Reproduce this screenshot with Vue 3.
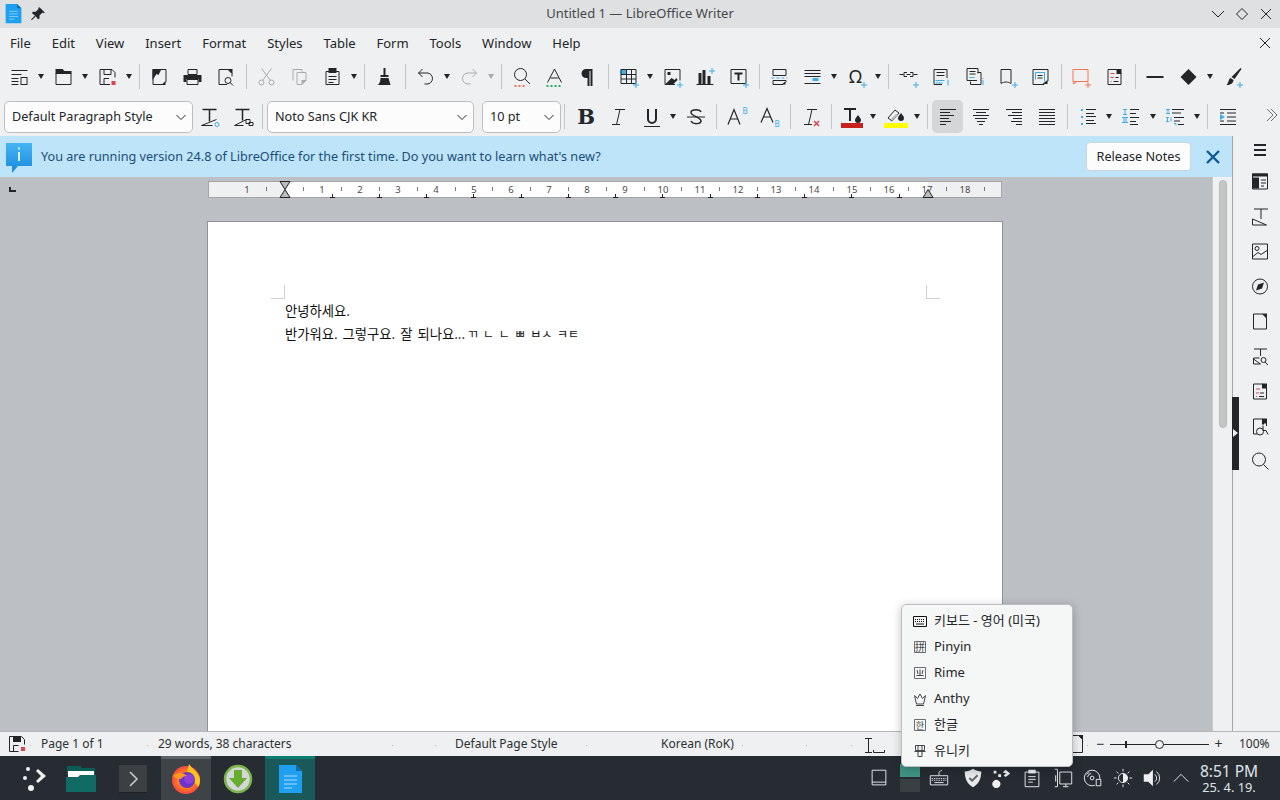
<template>
  <div class="screen">
    <!-- title bar -->
    <header class="titlebar">
      <svg class="tb-logo" viewBox="0 0 24 24" v-html="icons.writer"></svg>
      <svg class="tb-pin" viewBox="0 0 24 24" v-html="icons.pin"></svg>
      <span class="title">Untitled 1 — LibreOffice Writer</span>
      <div class="winctl">
        <svg viewBox="0 0 24 24" v-html="icons.winmin"></svg>
        <svg viewBox="0 0 24 24" v-html="icons.winmax"></svg>
        <svg viewBox="0 0 24 24" v-html="icons.winclose"></svg>
      </div>
    </header>

    <!-- menu -->
    <nav class="menubar">
      <span v-for="m in menus" :key="m">{{ m }}</span>
      <svg class="menu-close" viewBox="0 0 24 24" v-html="icons.winclose"></svg>
    </nav>

    <!-- toolbars -->
    <div class="toolbar tb1">
      <template v-for="(it, idx) in row1" :key="idx">
        <i v-if="it === '|'" class="sep"></i>
        <i v-else-if="it === '>'" class="arrow"></i>
        <i v-else-if="it === '>g'" class="arrow off"></i>
        <svg v-else class="cell" viewBox="0 0 24 24" v-html="icons[it]"></svg>
      </template>
    </div>
    <div class="toolbar tb2">
      <div class="combo c-style">Default Paragraph Style<svg viewBox="0 0 12 12"><path d="M1.5 4l4.5 4.5L10.500 4" /></svg></div>
      <svg class="cell" viewBox="0 0 24 24" v-html="icons.tupdate"></svg>
      <svg class="cell" viewBox="0 0 24 24" v-html="icons.tnew"></svg>
      <i class="sep tight"></i>
      <div class="combo c-font">Noto Sans CJK KR<svg viewBox="0 0 12 12"><path d="M1.5 4l4.5 4.5L10.500 4" /></svg></div>
      <div class="combo c-size">10 pt<svg viewBox="0 0 12 12"><path d="M1.5 4l4.5 4.5L10.500 4" /></svg></div>
      <i class="sep tight"></i>
      <template v-for="(it, idx) in row2" :key="idx">
        <i v-if="it === '|'" class="sep"></i>
        <i v-else-if="it === '>'" class="arrow"></i>
        <span v-else class="cellwrap" :class="{ active: it === 'alignl' }">
          <svg viewBox="0 0 24 24" v-html="icons[it]"></svg>
        </span>
      </template>
      <svg class="more" viewBox="0 0 24 24" v-html="icons.more"></svg>
    </div>

    <!-- body -->
    <div class="body">
      <div class="docarea">
        <div class="infobar">
          <svg class="info-ic" viewBox="0 0 26 30" v-html="icons.info"></svg>
          <span class="info-text">You are running version 24.8 of LibreOffice for the first time. Do you want to learn what's new?</span>
          <button class="relnotes">Release Notes</button>
          <svg class="info-x" viewBox="0 0 24 24" v-html="icons.infox"></svg>
        </div>
        <div class="docrow">
          <div class="workspace">
            <i class="tabmark"></i>
            <svg class="ruler" width="794" height="17" viewBox="0 0 794 17">
              <rect x="0.500" y="0.500" width="793" height="16" fill="#eff0f1" stroke="#a3a5a8" />
              <rect x="76" y="1" width="644" height="15" fill="#fff" />
              <template v-for="t in rulerTicks" :key="t">
                <path :d="`M${t + 0.5} 6v4`" stroke="#77797c" />
              </template>
              <text v-for="n in rulerNums" :key="n.x" :x="n.x" y="12" class="rnum">{{ n.t }}</text>
              <path v-for="x in rulerTabs" :key="x" :d="`M${x + 0.5} 13v3M${x - 2} 16.500h5`" stroke="#232629" />
              <path d="M72 0.500h10l-5 8zM72 16.500h10l-5-8z" fill="#b9bbbd" stroke="#232629" />
              <path d="M715 16.500h10l-5-8z" fill="#b9bbbd" stroke="#232629" />
            </svg>
            <div class="page">
              <i class="crop tl"></i>
              <i class="crop tr"></i>
              <p>안녕하세요.</p>
              <p class="line2">반가워요. 그렇구요. 잘 되나요...<span class="jamo">ㄲ ㄴ ㄴ ㅃ ㅂㅅ ㅋㅌ</span></p>
            </div>
          </div>
          <div class="vscroll"><div class="thumb"></div></div>
        </div>
      </div>
      <aside class="sidebar">
        <svg v-for="s in sideIcons" :key="s" viewBox="0 0 24 24" v-html="icons[s]"></svg>
        <div class="sidegrip"><i></i></div>
      </aside>
    </div>

    <!-- status bar -->
    <footer class="statusbar">
      <div v-for="c in statusCells" :key="c.k" class="st" :style="{ width: c.w + 'px', paddingLeft: c.p + 'px' }">
        <svg v-if="c.ic" viewBox="0 0 24 24" v-html="icons[c.ic]"></svg>
        <template v-else>{{ c.t }}</template>
      </div>
      <div class="zoomctl">
        <span class="zm">−</span>
        <div class="slider"><i class="tick"></i><i class="knob"></i></div>
        <span class="zm">+</span>
        <span class="pct">100%</span>
      </div>
    </footer>

    <!-- panel -->
    <div class="taskbar">
      <div class="task" style="width: 50px"><svg viewBox="0 0 30 30" v-html="icons.launcher"></svg></div>
      <div class="task" style="width: 46px"><svg viewBox="0 0 30 30" v-html="icons.files"></svg></div>
      <div class="task" style="width: 57px"><svg viewBox="0 0 30 30" v-html="icons.terminal"></svg></div>
      <div class="task open"><svg viewBox="0 0 30 30" v-html="icons.firefox"></svg></div>
      <div class="task" style="width: 54px"><svg viewBox="0 0 30 30" v-html="icons.download"></svg></div>
      <div class="task current"><svg viewBox="0 0 30 30" v-html="icons.writerTask"></svg></div>
      <div class="tray">
        <template v-for="t in trayIcons" :key="t.i">
          <div v-if="t.i === 'pager'" class="pager" :style="{ marginLeft: t.m + 'px' }"><i></i><i></i></div>
          <svg v-else viewBox="0 0 24 24" :style="{ marginLeft: t.m + 'px' }" v-html="icons[t.i]"></svg>
        </template>
        <div class="clock"><b>8:51 PM</b><span>25. 4. 19.</span></div>
      </div>
    </div>

    <!-- input method popup -->
    <div class="immenu">
      <div v-for="m in imeItems" :key="m.t" class="imrow">
        <svg viewBox="0 0 16 16" v-html="icons[m.i]"></svg>
        <span>{{ m.t }}</span>
      </div>
    </div>
  </div>
</template>

<script setup>
const D = '#232629'
const B = '#3daee9'
const R = '#da4453'
const O = '#f47750'
const G = '#a9abad'
const W = '#eff0f1'

// svg wrapper attributes live in css (stroke, fill), these are only the shapes
const plus = `<path stroke="${B}" d="M19.500 17v6M16.500 20h6"/>`
const solid = (d, c = D) => `<path fill="${c}" stroke="none" d="${d}"/>`

const icons = {
  writer: `<path fill="#1e9ff0" stroke="none" d="M3 1h13l5 5v17H3z"/><path fill="#0e6fae" stroke="none" d="M16 1l5 5h-5z"/><path stroke="#8fd0f7" d="M7 9.500h10M7 12.500h10M7 15.500h10M7 18.500h6"/>`,
  pin: solid('M14 3l7 7-2 1-1-1-4 4 0 4-2 1-3-4-5 5-1 0 0-1 5-5-4-3 1-2 4 0 4-4-1-1z'),
  winmin: `<path d="M6 9l6 6 6-6"/>`,
  winmax: `<path d="M12 6.500L17.500 12 12 17.500 6.500 12z"/>`,
  winclose: `<path d="M7 7l10 10M17 7L7 17"/>`,

  styles: `<path d="M4 5.500h16M4 9.500h10M4 13.500h7M4 16.500h7M4 19.500h7"/><rect x="13.500" y="12.500" width="6" height="7"/>`,
  open: `<path d="M4.500 8.500h15v11h-15z"/>` + solid('M4 4h7l2 2h7v3H4z'),
  save: `<path d="M4.500 4.500h12l3 3v5M4.500 4.500v15h10"/><path d="M8.500 4.500v5h7v-5M8.500 19.500v-6h5"/>` + solid('M16 16h4v4h-4z', R),
  pdf: `<path d="M5.500 4.500h13v12l-3 3h-10z"/>` + solid('M5 4h9l-3 6-2-1-4 6zM18 16v4h-4z'),
  print: solid('M3 10h18v7h-3v-3H6v3H3z') + `<path d="M7.500 4.500h9v5h-9zM6.500 14.500h11v5h-11z"/>`,
  preview: `<path d="M13.500 19.500h-8v-15h9l4 4v3"/>` + solid('M14 4h5v5z') + `<circle cx="14.500" cy="15.500" r="3"/><path d="M16.500 17.500l3 3"/>`,
  cut: `<g stroke="${G}"><circle cx="7" cy="17.500" r="2.500"/><circle cx="17" cy="17.500" r="2.500"/><path d="M7 3.500l9 12M17 3.500l-9 12"/></g>`,
  copy: `<g stroke="${G}"><path d="M5.500 15.500v-11h9v3"/><path d="M9.500 7.500h9v8l-4 4h-5z"/></g>` + solid('M14 15h5l-5 5z', G),
  paste: `<path d="M5.500 6.500h13v13h-13z"/>` + solid('M8 3h8v5H8z') + `<path d="M8 11.500h8M8 14.500h8M8 17.500h5"/>`,
  brush: solid('M11 3h2v7h3v2H8v-2h3zM8 13h8l2 7H5c2-1 3-4 3-7z'),
  undo: `<path d="M9 4L5 8l4 4M5 8h8.500a5.500 5.500 0 0 1 0 11H11"/>`,
  redo: `<path stroke="${G}" d="M15 4l4 4-4 4M19 8h-8.500a5.500 5.500 0 0 0 0 11H13"/>`,
  find: `<circle cx="11" cy="9.500" r="6"/><path d="M15.500 14l5 5"/><path stroke="${O}" stroke-width="2" stroke-dasharray="2 2" d="M5 21h12"/>`,
  spell: `<path d="M5 17.500L12 4l7 13.500M8 13h8"/><path stroke="#27ae60" stroke-width="2" stroke-dasharray="2 2" d="M4 21h16"/>`,
  para: solid('M17 4h-6.500a4.500 4.500 0 0 0 0 9H12v8h2V6h1v15h2z'),
  table: solid('M4 4h6v5H4z', B) + `<path d="M4.500 4.500h15v14h-15zM4.500 9.500h15M4.500 14h15M10 4.500v14M15 4.500v14"/>` + plus,
  image: `<path d="M4.500 4.500h15v11M4.500 4.500v15h10"/>` + solid('M5 19l6-6 3 2 2-2 1 2-4 4z') + solid('M7 7h3v3H7z') + plus,
  chart: solid('M5 8h3v11H5zM9 5h3v14H9zM14 11h3v8h-3z') + `<path d="M3 19.500h17"/>` + `<path stroke="${B}" d="M18.500 3v6M15.500 6h6"/>`,
  textbox: `<path d="M4.500 4.500h15v14h-15z"/><path stroke-width="2" d="M8 8.500h8M12 8.500v7"/>` + plus,
  pgbreak: `<path d="M5.500 4.500h13v6h-13z"/><path stroke="${B}" stroke-dasharray="3 2" d="M4 13h16"/><path d="M5.500 15.500h13v1l-3 3h-10z"/>` + solid('M14 19.500l4-3v3z'),
  field: `<path d="M4 5.500h16M4 8.500h16M4 11.500h16M4 18.500h16"/>` + solid('M12 13h6v3h-6z', B),
  omega: `<text x="11" y="18" text-anchor="middle" font-size="18" fill="${D}" stroke="none" font-family="Noto Sans">Ω</text>` + plus,
  link: `<path d="M3 9.500h4M17 9.500h4M7.500 7.500h3M13.500 7.500h3v4h-3M10.500 11.500h-3v-4M10 9.500h4"/>` + plus,
  footnote: `<path d="M17.500 13V4.500h-13v15h8"/><path d="M7 7.500h8M7 10.500h8"/><path stroke="${B}" d="M6 15.500h9M6 18h7M18.500 14.500v6"/>`,
  endnote: `<path d="M14.500 15.500h-10v-12h11v5"/><path d="M15 7.500h3.500v12H8v-3"/><path d="M7 6.500h6M7 9h6"/><path stroke="${B}" d="M7 12.500h5M20.500 13v1M20.500 15v5"/>`,
  bookmark: `<path d="M5.500 18.500V4.500h10v14"/><path d="M5.500 18.500c3-2 7-2 10 0"/>` + plus,
  crossref: `<path d="M4.500 4.500h15v11l-4 4h-11z"/><path stroke="${B}" d="M7 7.500h9v9M7 7.500v7"/><path d="M9 10.500h5M9 13h5"/>` + solid('M14 19l5-4v4z'),
  comment: `<g stroke="${O}"><path d="M3.500 4.500h15v12h-15zM4 17v2l3-2"/></g>` + `<path stroke="${O}" d="M18.500 17v6M15.500 20h6"/>`,
  tracked: `<path d="M5.500 4.500h9l4 4v11h-13z"/>` + solid('M14 4h5v5h-5z') + `<path stroke="${R}" d="M8 8.500h4"/><path d="M13 12.500h3"/><path stroke="${R}" d="M8 12.500h3M8 16.500h1"/><path d="M11 16.500h5"/>`,
  line: `<path stroke-width="2" d="M3 12h17"/>`,
  diamond: solid('M12 4l8 8-8 8-8-8z'),
  draw: solid('M20 3l1 1-7 10-3-2zM10 13l3 2c0 3-3 5-7 5 2-2 2-6 4-7z') + plus,

  tupdate: `<path stroke-width="1.500" d="M4 4.500h14M11 4.500v12"/><path d="M3 20.500l15-6M3 20.500h11"/><circle cx="18.500" cy="19.500" r="2" stroke="${B}"/>`,
  tnew: `<path stroke-width="1.500" d="M4 4.500h14M11 4.500v11"/><path d="M3 20.500l12-6M3 20.500h9"/><path d="M14.500 14.500h4v4h-4z"/><path d="M17.500 17.500h4v3h-4z"/>`,
  bold: `<text x="12" y="18.500" text-anchor="middle" font-size="21" font-weight="700" fill="${D}" stroke="none" font-family="DejaVu Serif">B</text>`,
  italic: `<path d="M8 4.500h10M13 4.500L9.500 19.500M5 19.500h8"/>`,
  under: `<path stroke-width="2" d="M8 4v10a4 4 0 0 0 8 0V4"/><path d="M4 21.500h16"/>`,
  strike: `<path stroke-width="1.500" d="M17 7c-1-3-9-3-10 0-1 4 10 5 10 9 0 3-8 4-10 0"/><path d="M3 12h18"/>`,
  sup: `<path stroke-width="1.200" d="M3 19.500L9 4.500l6 15M5.500 14h7"/><text x="20" y="9" text-anchor="middle" font-size="8" fill="${B}" stroke="none" font-family="Noto Sans">B</text>`,
  sub: `<path stroke-width="1.200" d="M3 17.500L9 3.500l6 14M5.500 12h7"/><text x="19" y="22" text-anchor="middle" font-size="8" fill="${B}" stroke="none" font-family="Noto Sans">B</text>`,
  clear: `<path d="M8 4.500h10M13 4.500L9.500 19.500M5 19.500h8"/><path stroke="${R}" stroke-width="1.500" d="M15 16l5 5M20 16l-5 5"/>`,
  color: `<path stroke-width="2" d="M4 4h12M10 4v12"/>` + solid('M18 10c-1 2-3 3-3 5a3 3 0 0 0 6 0c0-2-2-3-3-5z') + solid('M1 18h22v5H1z', '#c9211e'),
  hilite: `<path d="M4 13l7-8 4 3-7 8z"/>` + solid('M7 14l5-5 2 1-6 6z', '#bbb') + solid('M17 8c-1 2-3 3-3 5a3 3 0 0 0 6 0c0-2-2-3-3-5z') + solid('M-0 18h24v5H0z', '#ffff00'),
  alignl: `<path d="M4 4.500h16M4 7.500h10M4 10.500h14M4 13.500h9M4 16.500h11M4 19.500h6"/>`,
  alignc: `<path d="M4 4.500h16M7 7.500h10M4 10.500h16M6 13.500h12M8 16.500h8M10 19.500h4"/>`,
  alignr: `<path d="M4 4.500h16M10 7.500h10M6 10.500h14M11 13.500h9M9 16.500h11M14 19.500h6"/>`,
  alignj: `<path d="M4 4.500h16M4 7.500h16M4 10.500h16M4 13.500h16M4 16.500h16M4 19.500h16"/>`,
  bullets: solid('M5 4h2v2H5zM5 11h2v2H5zM5 18h2v2H5z', B) + `<path d="M10 4.500h10M10 8.500h8M10 11.500h10M10 15.500h8M10 18.500h10"/>`,
  numbers: `<path stroke="${B}" d="M3 4.500h4M5 4.500v5M3 9.500h4M2 12.500h6M4 12.500v5M6 12.500v5M2 17.500h6"/><path d="M10 4.500h9M10 8.500h6M10 12.500h9M10 16.500h6M10 19.500h8"/>`,
  outline: `<path stroke="${B}" d="M2 4.500h4M4 4.500v4M2 8.500h4M2 12.500h3M3.500 12.500v4M2 16.500h3M7 12.500v4M10 18.500h2v2"/><path d="M8 4.500h12M8 8h9M10 12.500h10M10 16h6M14 19.500h6"/>`,
  indent: `<path d="M4 4.500h16M4 19.500h16M11 8h9M11 12h9M11 16h9M4 8h4M4 16h4"/>` + solid('M4 9l5 3-5 3z', B),
  more: `<path d="M7 6l6 6-6 6M11 6l6 6-6 6"/>`,

  info: `<defs><linearGradient id="ig" x1="0" y1="0" x2="0" y2="1"><stop offset="0" stop-color="#45b6f3"/><stop offset="1" stop-color="#1789dc"/></linearGradient></defs>` + `<path fill="url(#ig)" stroke="none" d="M0 0h26v23H12l-6 7v-7H0z"/><path stroke="#d8effc" stroke-width="2" fill="none" d="M13 9v9"/><path stroke="#d8effc" stroke-width="2" d="M13 4.500v2"/>`,
  infox: `<path stroke="#0f5a94" stroke-width="2.400" d="M6 6l12 12M18 6L6 18"/>`,

  menu: `<path stroke-width="2" d="M6 7h12M6 12h12M6 17h12"/>`,
  props: solid('M4 4h16v3H4z') + `<path d="M4.500 4.500h15v15h-15z"/>` + solid('M5 8h6v11H5z') + `<path d="M13 10.500h5M13 13.500h5M13 16.500h3"/>`,
  tstyle: `<path d="M6 4.500h14M13 4.500v10"/><path d="M4.500 20.500v-6l14 6z"/>`,
  gallery: `<path d="M4.500 4.500h15v15h-15z"/><circle cx="9" cy="9" r="2"/><path d="M5 17l5-4 3 2 6-4"/>`,
  compass: `<circle cx="12" cy="12" r="7.500"/>` + solid('M16 8l-2 6-6 2 2-6z'),
  pagei: `<path d="M5.500 4.500h9l4 4v11h-13z"/>` + solid('M14 4h5v5z'),
  tfind: `<path d="M6 4.500h13M12.500 4.500v7"/><path d="M5.500 19.500v-6h6M5.500 19.500h7l-7-5"/><circle cx="15.500" cy="15.500" r="2.500"/><path d="M17 17.500l3 3"/>`,
  change: `<path d="M5.500 4.500h9l4 4v11h-13z"/>` + solid('M14 4h5v5h-5z') + `<path stroke="${R}" d="M8 9.500h4M8 13.500h3M8 17h1"/><path d="M12 13.500h4M11 17h5"/>`,
  access: `<path d="M9 19.500H5.500v-15h9l4 4v3"/>` + solid('M14 4h5v5h-5z') + `<circle cx="12" cy="17" r="3.500"/><path d="M15 11v5h3l2 4"/>` + solid('M14 8h2v2h-2z'),
  search: `<circle cx="11" cy="10" r="6.500"/><path d="M15.500 15l5 5"/>`,

  floppy: `<path d="M4.500 4.500h12l3 3v5M4.500 4.500v15h9"/>` + solid('M8 4h8v6H8z') + `<path d="M8.500 19.500v-6h5"/>` + solid('M16 15h4v4h-4z', R),
  cursor: `<path d="M3 6.500h7M3 20.500h7M6.500 6.500v14"/><path d="M11.500 18v2.500h11V18"/>`,
  docs: `<path d="M4.500 3.500h11l4 4v13h-15z"/>` + solid('M15 3h5v5z'),

  launcher: `<circle cx="7" cy="14" r="2" fill="${W}" stroke="none"/><circle cx="10" cy="5" r="2" fill="${W}" stroke="none"/><circle cx="13" cy="24" r="3" fill="${W}" stroke="none"/>` + solid('M18 7l2-2 8 7-8 7-2-2 5-5z', W),
  files: solid('M1 2h14v2h14v7H1z', '#0a5c56') + solid('M2 7h26v6H2z', '#fcfcfc') + `<path fill="#0f6b64" stroke="none" d="M0 13h12l2-2h16v17H0z"/>`,
  terminal: solid('M1 1h28v27H1z', '#3c4043') + solid('M1 28h28v1H1z', '#1e2023') + `<path stroke="#c8cacb" stroke-width="1.600" d="M12 8l7 7-7 7"/>`,
  firefox: `<defs><radialGradient id="ff1" cx="0.500" cy="0.500" r="0.600"><stop offset="0" stop-color="#ffd23a"/><stop offset="0.500" stop-color="#ff7a1c"/><stop offset="1" stop-color="#f0315a"/></radialGradient></defs>` +
    `<circle cx="15" cy="16" r="14" fill="url(#ff1)" stroke="none"/>` + solid('M18 0c3 5 10 8 11 15 0 3 0 6-2 8L16 8z', '#ffc21e') +
    `<circle cx="16" cy="16" r="8" fill="#6a34c8" stroke="none"/><circle cx="18" cy="15" r="5" fill="#8d3fd8" stroke="none"/>` + solid('M2 12c4-4 10-4 14 0-3 0-5 1-6 3-3 0-6-1-8-3z', '#ff9a1f'),
  download: `<circle cx="15" cy="15" r="13" fill="#d4d6d8" stroke="#7ab648" stroke-width="2.500"/>` + solid('M11 6h8v8h5l-9 10-9-10h5z', '#67ad2e'),
  writerTask: solid('M4 1h17l6 6v22H4z', '#1f9ff0') + solid('M21 1l6 6h-6z', '#0f6ba8') + `<path stroke="#7fc7f5" stroke-width="1.500" d="M9 12h13M9 16h13M9 20h13M9 24h8"/>`,

  showdesk: `<path stroke="${W}" d="M4.500 3.500h15v16h-15zM4.500 16.500h15"/>`,
  trayKbd: `<g stroke="${W}"><path d="M2.500 9.500h19v10h-19z"/><path stroke-dasharray="1.500 1" d="M4 12.500h16M4 14.500h16"/><path d="M7 17h10"/><path d="M12 9V6c0-2 3-1 3-3"/></g>`,
  shield: solid('M12 2c3 2 6 3 9 3 0 8-3 14-9 17C6 19 3 13 3 5c3 0 6-1 9-3z', '#e8e9ea') + `<path stroke="#5f6367" stroke-width="2" d="M8 12l3 3 6-6"/>`,
  trayNet: solid('M7 14a4.500 4.500 0 1 1-.1 0zM4 4h3v3H4zM9 8h3v3H9z', W) + solid('M14 6l3-3 5 4-5 4-2-2 3-2z', W),
  clip: `<g stroke="${W}"><path d="M4.500 5.500h15v16h-15z"/><path d="M8 10.500h8M8 13.500h8M8 16.500h5"/></g>` + solid('M8 3h8v4H8z', W),
  trayLan: `<g stroke="${W}"><path d="M8.500 5.500h13v13h-13zM3 2.500h3v19H3"/><path d="M4 9v7"/><path d="M12 21.500h6M15 18.500v3"/></g>`,
  disc: `<g stroke="${W}"><circle cx="11" cy="12" r="8.500"/><circle cx="11" cy="12" r="2"/><path d="M6 11a5 5 0 0 1 4-4M5 8a7 7 0 0 1 3-2"/></g>` + solid('M14 13h7v8h-7z', '#272c33') + `<path stroke="${W}" d="M15.500 13.500h5v7h-5z"/>`,
  sun: `<g stroke="${W}"><circle cx="12" cy="12" r="5"/><path d="M12 2v3M12 19v3M2 12h3M19 12h3M5 5l2 2M17 17l2 2M5 19l2-2M17 7l2-2"/></g>` + solid('M12 7a5 5 0 0 1 0 10z', W),
  volume: solid('M3 8h5l5-5v18l-5-5H3z', W) + `<path stroke="${W}" d="M15 8a5 5 0 0 1 0 8M17 5a9 9 0 0 1 0 14"/>`,
  chev: `<path stroke="${W}" d="M4 16l8-8 8 8"/>`,

  kbd: `<path stroke="#111" d="M1.500 3.500h13v10h-13z"/><path stroke="#111" stroke-dasharray="1 1" d="M3 6.500h10M3 8.500h10"/><path stroke="#111" d="M4 11h8"/>`,
  pinyin: `<path stroke="#6b6e71" d="M2.500 2.500h11v11h-11z"/><text x="8" y="12" text-anchor="middle" font-size="10" fill="#44474a" stroke="none" font-family="Noto Sans CJK SC">拼</text>`,
  rime: `<path stroke="#6b6e71" d="M2.500 2.500h11v11h-11z"/><path stroke="#44474a" d="M5 5l1 4M11 5l-1 4M8 4.500v6M4.500 10.500h7"/>`,
  crown: `<path stroke="#44474a" d="M2.500 4.500l2 8.500h7l2-8.500-3 3L8 3 5.500 7.500z"/><path stroke="#44474a" d="M4 14.500h8"/>`,
  hangul: `<path stroke="#6b6e71" d="M2.500 2.500h11v11h-11z"/><text x="8" y="11.500" text-anchor="middle" font-size="9" fill="#44474a" stroke="none" font-family="Noto Sans CJK KR">한</text>`,
  unikey: `<path stroke="#44474a" d="M3.500 2.500h9v5h-9zM6 2.500v5M10 2.500v5M2.500 8.500h11M6 8.500v5h4v-5"/>`,
}

const menus = ['File', 'Edit', 'View', 'Insert', 'Format', 'Styles', 'Table', 'Form', 'Tools', 'Window', 'Help']

const row1 = [
  'styles', '>', 'open', '>', 'save', '>', '|', 'pdf', 'print', 'preview', '|', 'cut', 'copy', 'paste', '>', '|', 'brush', '|',
  'undo', '>', 'redo', '>g', '|', 'find', 'spell', 'para', '|', 'table', '>', 'image', 'chart', 'textbox', '|',
  'pgbreak', 'field', '>', 'omega', '>', '|', 'link', 'footnote', 'endnote', 'bookmark', 'crossref', '|', 'comment', 'tracked', '|',
  'line', 'diamond', '>', 'draw',
]

const row2 = [
  'bold', 'italic', 'under', '>', 'strike', '|', 'sup', 'sub', '|', 'clear', '|', 'color', '>', 'hilite', '>', '|',
  'alignl', 'alignc', 'alignr', 'alignj', '|', 'bullets', '>', 'numbers', '>', 'outline', '>', '|', 'indent',
]

const sideIcons = ['menu', 'props', 'tstyle', 'gallery', 'compass', 'pagei', 'tfind', 'change', 'access', 'search']

// ruler marks, 1cm = 37.8px, origin at the left margin
const rulerOrigin = 76.5
const rulerNums = []
const rulerTicks = []
for (let i = -2; i <= 37; i++) {
  const x = Math.round(rulerOrigin + i * 18.9)
  if (x < 4 || x > 790) continue
  if (i % 2 === 0 && i !== 0) {
    rulerNums.push({ x, t: String(Math.abs(i / 2)) })
  } else if (i !== 0) {
    rulerTicks.push(x)
  }
}
const rulerTabs = []
for (let i = 0; i < 13; i++) rulerTabs.push(Math.round(123.5 + i * 47.25))

const statusCells = [
  { k: 'save', w: 31, p: 5, ic: 'floppy' },
  { k: 'page', w: 117, p: 10, t: 'Page 1 of 1' },
  { k: 'words', w: 245, p: 10, t: '29 words, 38 characters' },
  { k: 'e1', w: 43, p: 0 },
  { k: 'style', w: 151, p: 19, t: 'Default Page Style' },
  { k: 'lang', w: 156, p: 74, t: 'Korean (RoK)' },
  { k: 'e2', w: 64, p: 0 },
  { k: 'e3', w: 45, p: 0 },
  { k: 'cur', w: 210, p: 10, ic: 'cursor' },
  { k: 'doc', w: 26, p: 1, ic: 'docs' },
]

const trayIcons = [
  { i: 'showdesk', m: 0 },
  { i: 'pager', m: 10 },
  { i: 'trayKbd', m: 8 },
  { i: 'shield', m: 12 },
  { i: 'trayNet', m: 6 },
  { i: 'clip', m: 9 },
  { i: 'trayLan', m: 9 },
  { i: 'disc', m: 8 },
  { i: 'sun', m: 8 },
  { i: 'volume', m: 7 },
  { i: 'chev', m: 7 },
]

const imeItems = [
  { i: 'kbd', t: '키보드 - 영어 (미국)' },
  { i: 'pinyin', t: 'Pinyin' },
  { i: 'rime', t: 'Rime' },
  { i: 'crown', t: 'Anthy' },
  { i: 'hangul', t: '한글' },
  { i: 'unikey', t: '유니키' },
]
</script>

<style>
html,
body {
  margin: 0;
  background: #272c33;
}
</style>

<style scoped>
.screen {
  position: relative;
  width: 1280px;
  height: 800px;
  overflow: hidden;
  display: flex;
  flex-direction: column;
  background: #eff0f1;
  color: #232629;
  font: 13px/1.2 "Noto Sans", "Noto Sans CJK KR", sans-serif;
}

svg {
  fill: none;
  stroke: #232629;
  stroke-width: 1;
  flex: none;
}

/* title bar */
.titlebar {
  position: relative;
  height: 28px;
  flex: none;
  display: flex;
  align-items: center;
  justify-content: center;
  background: #dee0e2;
}
.tb-logo,
.tb-pin {
  position: absolute;
  top: 3px;
  width: 21px;
  height: 21px;
}
.tb-logo {
  left: 3px;
}
.tb-pin {
  top: 5px;
  left: 29px;
  width: 18px;
  height: 18px;
}
.title {
  color: #45484b;
}
.winctl {
  position: absolute;
  right: 2px;
  top: 2px;
  display: flex;
}
.winctl svg {
  width: 24px;
  height: 24px;
}

/* menu */
.menubar {
  position: relative;
  height: 28px;
  flex: none;
  box-sizing: border-box;
  display: flex;
  align-items: center;
  gap: 20.900px;
  padding: 3px 0 0 10px;
}
.menu-close {
  position: absolute;
  right: 3px;
  top: 3px;
  width: 24px;
  height: 24px;
}

/* toolbars */
.toolbar {
  flex: none;
  display: flex;
  align-items: center;
}
.tb1 {
  height: 41px;
  padding-left: 2.500px;
}
.tb2 {
  position: relative;
  height: 39px;
  padding-left: 4px;
}
.cell {
  width: 24px;
  height: 24px;
  padding: 0 4.5px;
  box-sizing: content-box;
}
.cellwrap {
  width: 33px;
  height: 33px;
  flex: none;
  display: flex;
  align-items: center;
  justify-content: center;
  border-radius: 5px;
}
.cellwrap svg {
  width: 24px;
  height: 24px;
}
.cellwrap.active {
  background: #d5d6d8;
  width: 31px;
  margin: 0 1px;
}
.sep {
  width: 8px;
  height: 25px;
  flex: none;
  position: relative;
}
.sep::before {
  content: "";
  position: absolute;
  left: 4px;
  top: 0;
  bottom: 0;
  width: 1px;
  background: #c2c4c6;
}
.sep.tight {
  width: 7px;
}
.sep.tight::before {
  left: 2px;
}
.arrow {
  width: 11px;
  height: 5px;
  flex: none;
  position: relative;
}
.arrow::before {
  content: "";
  position: absolute;
  left: 2px;
  top: 0;
  border-style: solid;
  border-width: 5px 3.5px 0;
  border-color: #232629 transparent transparent;
}
.arrow.off::before {
  border-top-color: #a9abad;
}
.combo {
  position: relative;
  box-sizing: border-box;
  height: 32px;
  flex: none;
  display: flex;
  align-items: center;
  padding-left: 7px;
  background: #fcfcfc;
  border: 1px solid #bcbfc2;
  border-radius: 5px;
  font-size: 12.650px;
}
.combo svg {
  position: absolute;
  right: 5px;
  top: 9px;
  width: 12px;
  height: 12px;
}
.c-style {
  width: 189px;
  margin-right: 1px;
}
.c-font {
  width: 207px;
  margin-right: 8px;
}
.c-size {
  width: 79px;
  margin-right: 1px;
}
.more {
  position: absolute;
  right: -4px;
  top: 6px;
  width: 24px;
  height: 24px;
  stroke: #6b6e71;
}

/* body */
.body {
  flex: 1;
  min-height: 0;
  display: flex;
}
.docarea {
  width: 1232px;
  flex: none;
  display: flex;
  flex-direction: column;
}
.infobar {
  height: 41px;
  flex: none;
  display: flex;
  align-items: center;
  background: #bde4f8;
  color: #1c4e78;
  padding-left: 6px;
  font-size: 12.650px;
}
.info-ic {
  width: 26px;
  height: 30px;
  margin-top: 2px;
  stroke: none;
}
.info-text {
  margin-left: 9px;
}
.relnotes {
  margin-left: auto;
  width: 105px;
  height: 29px;
  padding: 0;
  font: inherit;
  color: #232629;
  background: #fcfcfc;
  border: 1px solid #c9d8e0;
  border-radius: 4px;
}
.info-x {
  width: 24px;
  height: 24px;
  margin: 0 7px 0 10px;
}
.docrow {
  flex: 1;
  min-height: 0;
  display: flex;
}
.workspace {
  position: relative;
  flex: 1;
  min-width: 0;
  display: flex;
  flex-direction: column;
  align-items: flex-start;
  padding: 4px 0 0 208px;
  background: #bcbfc4;
}
.tabmark {
  position: absolute;
  left: 9px;
  top: 10px;
  width: 5px;
  height: 3px;
  border-left: 2px solid #232629;
  border-bottom: 2px solid #232629;
}
.ruler {
  stroke: none;
}
.rnum {
  font-size: 9.500px;
  fill: #4a4a48;
  stroke: none;
  text-anchor: middle;
}
.page {
  position: relative;
  box-sizing: border-box;
  width: 796px;
  flex: 1;
  margin: 23px 0 0 -1px;
  padding: 77px 0 0 77px;
  background: #fff;
  border: 1px solid #8f9296;
  border-bottom: 0;
  color: #111;
  font: 13.300px/23px "Noto Sans CJK KR", sans-serif;
}
.page p {
  margin: 0;
}
.line2 {
  word-spacing: 2px;
}
.jamo {
  margin-left: 2px;
  font-size: 12px;
  word-spacing: 2px;
}
.crop {
  position: absolute;
  top: 63px;
  width: 13px;
  height: 13px;
  border-bottom: 1px solid #cfd0d1;
}
.crop.tl {
  left: 63px;
  border-right: 1px solid #cfd0d1;
}
.crop.tr {
  left: 718px;
  border-left: 1px solid #cfd0d1;
}
.vscroll {
  width: 20px;
  flex: none;
  box-sizing: border-box;
  padding: 3px 6px 0;
  background: #eff0f1;
  border-left: 1px solid #c9cacc;
}
.thumb {
  width: 8px;
  height: 248px;
  background: #c5c7c7;
  border: 1px solid #b6b8b9;
  border-radius: 4px;
  box-sizing: border-box;
}
.sidebar {
  position: relative;
  width: 48px;
  flex: none;
  box-sizing: border-box;
  display: flex;
  flex-direction: column;
  align-items: flex-end;
  padding: 0 8px 0 0;
  border-left: 1px solid #a2a4a7;
}
.sidebar svg {
  width: 24px;
  height: 35px;
  padding: 5.5px 0;
  box-sizing: border-box;
}
.sidebar svg:first-child {
  height: 28px;
  padding: 2px 0;
}
.sidegrip {
  position: absolute;
  left: -1px;
  top: 261px;
  width: 7px;
  height: 73px;
  background: #232629;
}
.sidegrip i {
  position: absolute;
  left: 1px;
  top: 32px;
  border-style: solid;
  border-width: 4px 0 4px 5px;
  border-color: transparent transparent transparent #eff0f1;
}

/* status bar */
.statusbar {
  height: 25px;
  flex: none;
  box-sizing: border-box;
  display: flex;
  align-items: center;
  padding-top: 1px;
  border-top: 1px solid #b5b7ba;
  font-size: 12px;
  color: #2c3033;
}
.st {
  position: relative;
  flex: none;
  box-sizing: border-box;
  height: 22px;
  display: flex;
  align-items: center;
  white-space: nowrap;
}
/* the faint dot at the end of each status cell */
.st::after {
  content: "";
  position: absolute;
  right: 0;
  top: 11px;
  width: 1px;
  height: 1px;
  background: #b5b7ba;
}
.st svg {
  width: 24px;
  height: 24px;
  margin-top: -1px;
}
.zoomctl {
  display: flex;
  align-items: center;
  margin-left: 6px;
}
.zm {
  width: 13px;
  text-align: center;
  font-size: 14px;
}
.slider {
  position: relative;
  width: 99px;
  height: 1px;
  margin: 0 3px;
  background: #232629;
}
.tick {
  position: absolute;
  left: 15px;
  top: -3px;
  width: 2px;
  height: 7px;
  background: #232629;
}
.knob {
  position: absolute;
  left: 45px;
  top: -4px;
  width: 7px;
  height: 7px;
  border: 1px solid #232629;
  border-radius: 50%;
  background: #eff0f1;
}
.pct {
  margin-left: 14px;
}

/* panel */
.taskbar {
  height: 44px;
  flex: none;
  display: flex;
  padding-left: 8px;
  background: #272c33;
}
.task {
  width: 50px;
  flex: none;
  box-sizing: border-box;
  display: flex;
  align-items: center;
  justify-content: center;
  border-top: 3px solid transparent;
}
.task svg {
  width: 30px;
  height: 30px;
  margin-top: -2px;
  overflow: visible;
  stroke: none;
}
.task.open {
  background: #3e4347;
  border-top-color: #5c6165;
}
.task.current {
  background: #19595a;
  border-top-color: #0b7d70;
}
.tray {
  flex: 1;
  display: flex;
  align-items: center;
  padding-left: 553px;
}
.tray svg {
  width: 22px;
  height: 22px;
  stroke: #eff0f1;
}
.pager {
  width: 20px;
  height: 28px;
  display: flex;
  flex-direction: column;
  gap: 2px;
}
.pager i {
  flex: 1;
  background: #3a3f44;
}
.pager i:first-child {
  background: #3f9484;
}
.clock {
  display: flex;
  flex-direction: column;
  align-items: center;
  margin-left: 4px;
  width: 66px;
  color: #dfe4e8;
  line-height: 15px;
}
.clock b {
  font-weight: 400;
  font-size: 15.500px;
  line-height: 18px;
}
.clock span {
  font-size: 12.800px;
}

/* ime popup, sits over the page */
.immenu {
  position: absolute;
  left: 901px;
  top: 604px;
  box-sizing: border-box;
  width: 172px;
  height: 163px;
  padding-top: 3px;
  background: #f5f6f6;
  border: 1px solid #bcbfc2;
  border-radius: 5px;
  box-shadow: 0 2px 10px rgba(0, 0, 0, 0.25);
  font-family: "Noto Sans", "Noto Sans CJK KR", sans-serif;
}
.imrow {
  height: 26px;
  display: flex;
  align-items: center;
  padding-left: 10px;
}
.imrow svg {
  width: 16px;
  height: 16px;
  margin-right: 6px;
}
</style>
